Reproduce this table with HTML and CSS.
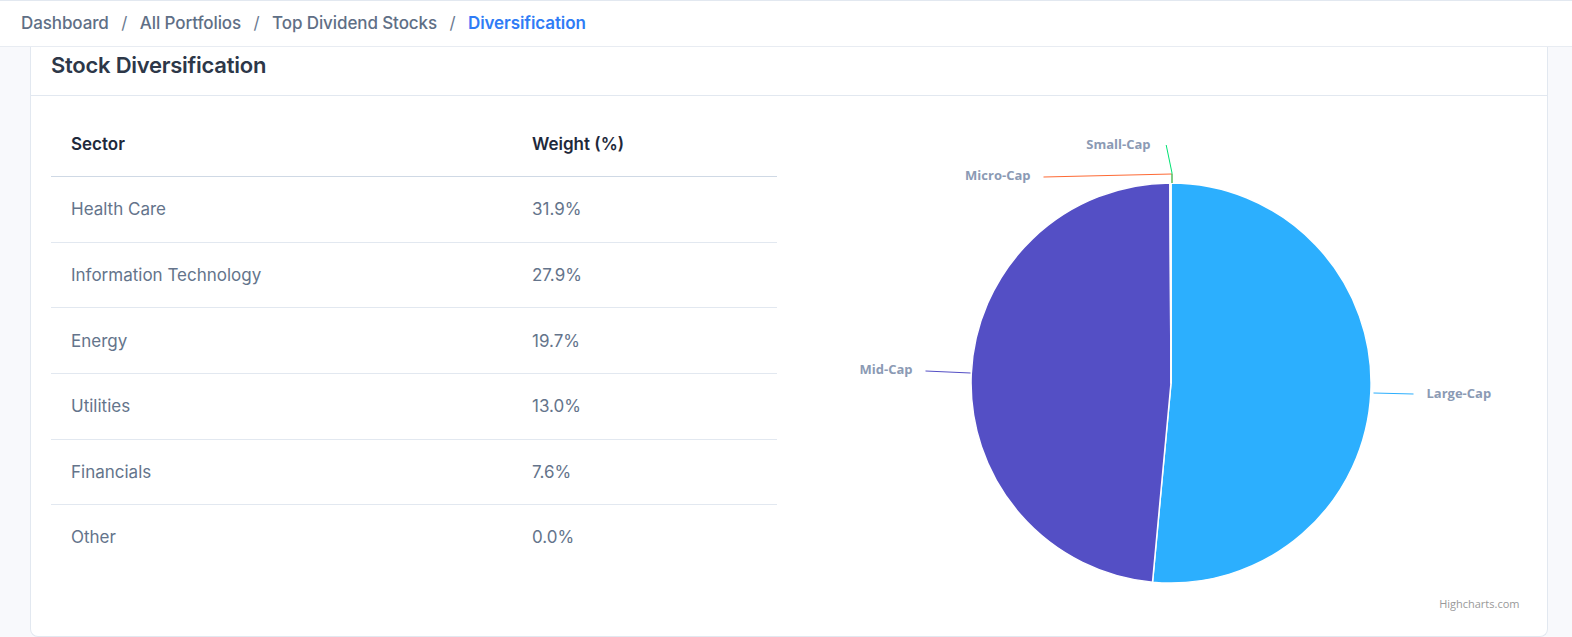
FILE: index.html
```html
<!DOCTYPE html>
<html lang="en">
<head>
<meta charset="utf-8">
<title>Stock Diversification</title>
<link rel="stylesheet" href="styles.css">
</head>
<body>
<header class="topbar">
  <nav class="crumbs">
    <span class="crumb">Dashboard</span><span class="sep">/</span>
    <span class="crumb">All Portfolios</span><span class="sep">/</span>
    <span class="crumb">Top Dividend Stocks</span><span class="sep">/</span>
    <span class="crumb active">Diversification</span>
  </nav>
</header>
<main class="page">
  <section class="card">
    <div class="card-header"><h2 class="card-title">Stock Diversification</h2></div>
    <div class="card-body">
      <div class="table-wrap">
        <table class="sectors">
          <thead>
            <tr><th class="col-sector">Sector</th><th>Weight (%)</th></tr>
          </thead>
          <tbody>
            <tr><td>Health Care</td><td>31.9%</td></tr>
            <tr><td>Information Technology</td><td>27.9%</td></tr>
            <tr><td>Energy</td><td>19.7%</td></tr>
            <tr><td>Utilities</td><td>13.0%</td></tr>
            <tr><td>Financials</td><td>7.6%</td></tr>
            <tr><td>Other</td><td>0.0%</td></tr>
          </tbody>
        </table>
      </div>
      <div class="chart">
        <svg class="chart-svg" width="750" height="502" viewBox="-1.5 1 750 502">
          <path class="slice" fill="#2caffe" d="M392.5 72 A200 200 0 1 1 374.03 471.14 L392.5 272 Z"/>
          <path class="slice" fill="#544fc5" d="M374.03 471.14 A200 200 0 0 1 391.45 72.003 L392.5 272 Z"/>
          <path class="slice" fill="#fe6a35" d="M391.45 72.003 A200 200 0 0 1 392 72 L392.5 272 Z"/>
          <path class="slice" fill="#00e272" d="M392 72 A200 200 0 0 1 392.5 72 L392.5 272 Z"/>

          <polyline class="conn" stroke="#2caffe" points="595,282 635,283"/>
          <polyline class="conn" stroke="#544fc5" points="147,260 192,262"/>
          <polyline class="conn" stroke="#fe6a35" points="265,66 393.5,63 393.5,72"/>
          <polyline class="conn" stroke="#00e272" points="387.7,34 393.5,62 393.5,72"/>

          <text class="lbl" x="648" y="287">Large-Cap</text>
          <text class="lbl end" x="134" y="263">Mid-Cap</text>
          <text class="lbl end" x="252" y="69">Micro-Cap</text>
          <text class="lbl end" x="372" y="38">Small-Cap</text>

          <text class="credit" x="741" y="497">Highcharts.com</text>
        </svg>
      </div>
    </div>
  </section>
</main>
</body>
</html>
```

FILE: styles.css
```css
* { box-sizing: border-box; }

html, body {
  margin: 0;
  padding: 0;
}

body {
  background: #f8f9fc;
  font-family: Inter, "Noto Sans", "Liberation Sans", sans-serif;
  width: 1572px;
  height: 637px;
  overflow: hidden;
}

.topbar {
  background: #ffffff;
  border-top: 1px solid #e2e8f0;
  border-bottom: 1px solid #e8ecf2;
  height: 47px;
  display: flex;
  align-items: center;
  padding: 0 0 2px 21px;
}

.crumbs {
  display: flex;
  align-items: center;
  font-size: 17px;
  font-weight: 500;
  color: #5f6f86;
  letter-spacing: -0.1px;
}

.sep {
  margin: 0 12.5px;
  color: #6b7a90;
  font-weight: 400;
}

.crumb.active {
  color: #2f7cf6;
  font-weight: 600;
}

.page {
  padding: 0 24px 0 30px;
}

.card {
  background: #ffffff;
  border: 1px solid #e2e8f0;
  border-top: 0;
  border-radius: 0 0 8px 8px;
}

.card-header {
  height: 49px;
  border-bottom: 1px solid #e2e8f0;
  padding: 3px 20px 0 20px;
}

.card-title {
  margin: 0;
  font-size: 22px;
  line-height: 30px;
  font-weight: 600;
  color: #2d3748;
  letter-spacing: -0.25px;
}

.card-body {
  display: flex;
  padding: 16px 20px 22px 20px;
}

.table-wrap {
  flex: 0 0 726px;
}

.sectors {
  width: 726px;
  border-collapse: collapse;
  font-size: 17px;
}

.sectors th {
  text-align: left;
  font-weight: 600;
  color: #1e293b;
  line-height: 24px;
  padding: 20px;
  border-bottom: 1px solid #cfd9e5;
}

.sectors th.col-sector {
  width: 461px;
}

.sectors td {
  color: #64748b;
  line-height: 24px;
  padding: 20.25px 20px 20.4px;
  border-bottom: 1px solid #e2e8f0;
}

.sectors tbody tr:last-child td {
  border-bottom: 0;
}

.chart {
  flex: 0 0 750px;
  height: 502px;
}

.chart-svg {
  display: block;
}

.slice {
  stroke: #ffffff;
  stroke-width: 1.5;
  stroke-linejoin: round;
}

.conn {
  fill: none;
  stroke-width: 1;
}

.lbl {
  font-family: "Open Sans", "Noto Sans", sans-serif;
  font-size: 13px;
  font-weight: 700;
  fill: #8b9ab4;
}

.lbl.end {
  text-anchor: end;
}

.credit {
  font-family: "Open Sans", "Noto Sans", sans-serif;
  font-size: 11px;
  fill: #999999;
  text-anchor: end;
}
```
